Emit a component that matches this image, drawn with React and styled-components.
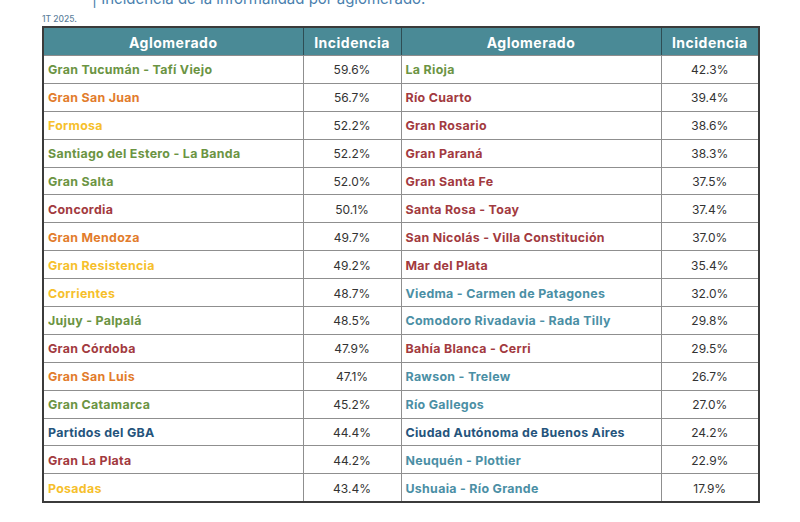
import styled, { createGlobalStyle } from "styled-components";

const GlobalStyle = createGlobalStyle`
  html, body {
    margin: 0;
    padding: 0;
    background: #ffffff;
  }
  body {
    font-family: "Inter", "Liberation Sans", sans-serif;
    width: 800px;
    height: 522px;
    overflow: hidden;
  }
`;

const COLORS = {
  green: "#6b9443",
  orange: "#e27c2c",
  yellow: "#f6bf2c",
  red: "#a23a40",
  navy: "#25547c",
  teal: "#4b8fa5",
};

const LEFT = [
  ["Gran Tucumán - Tafí Viejo", "59.6%", "green"],
  ["Gran San Juan", "56.7%", "orange"],
  ["Formosa", "52.2%", "yellow"],
  ["Santiago del Estero - La Banda", "52.2%", "green"],
  ["Gran Salta", "52.0%", "green"],
  ["Concordia", "50.1%", "red"],
  ["Gran Mendoza", "49.7%", "orange"],
  ["Gran Resistencia", "49.2%", "yellow"],
  ["Corrientes", "48.7%", "yellow"],
  ["Jujuy - Palpalá", "48.5%", "green"],
  ["Gran Córdoba", "47.9%", "red"],
  ["Gran San Luis", "47.1%", "orange"],
  ["Gran Catamarca", "45.2%", "green"],
  ["Partidos del GBA", "44.4%", "navy"],
  ["Gran La Plata", "44.2%", "red"],
  ["Posadas", "43.4%", "yellow"],
];

const RIGHT = [
  ["La Rioja", "42.3%", "green"],
  ["Río Cuarto", "39.4%", "red"],
  ["Gran Rosario", "38.6%", "red"],
  ["Gran Paraná", "38.3%", "red"],
  ["Gran Santa Fe", "37.5%", "red"],
  ["Santa Rosa - Toay", "37.4%", "red"],
  ["San Nicolás - Villa Constitución", "37.0%", "red"],
  ["Mar del Plata", "35.4%", "red"],
  ["Viedma - Carmen de Patagones", "32.0%", "teal"],
  ["Comodoro Rivadavia - Rada Tilly", "29.8%", "teal"],
  ["Bahía Blanca - Cerri", "29.5%", "red"],
  ["Rawson - Trelew", "26.7%", "teal"],
  ["Río Gallegos", "27.0%", "teal"],
  ["Ciudad Autónoma de Buenos Aires", "24.2%", "navy"],
  ["Neuquén - Plottier", "22.9%", "teal"],
  ["Ushuaia - Río Grande", "17.9%", "teal"],
];

const Page = styled.div`
  display: flex;
  flex-direction: column;
  padding: 0 42px;
`;

const Title = styled.div`
  margin-top: -11px;
  padding-left: 50px;
  font-family: "Inter", "Liberation Sans", sans-serif;
  font-size: 15px;
  line-height: 20px;
  color: #4a7fae;
  white-space: nowrap;
`;

const Period = styled.div`
  margin-top: 5px;
  font-family: "Inter", sans-serif;
  font-size: 8.5px;
  line-height: 10px;
  font-weight: 500;
  color: #5d7f9c;
`;

const Table = styled.table`
  margin-top: 2px;
  width: 716px;
  border-collapse: collapse;
  table-layout: fixed;
  border: 2px solid #3b3b3b;
`;

const HeadCell = styled.th`
  height: 25px;
  padding: 2px 0 0;
  background: #4a8a96;
  color: #ffffff;
  font-family: "Inter", sans-serif;
  font-weight: 700;
  font-size: 14px;
  line-height: 18px;
  letter-spacing: 0.5px;
  text-align: center;
  vertical-align: middle;
  border: 1px solid #2e4d54;
  border-bottom: 1.5px solid #8d8d8d;
`;

const NameCell = styled.td`
  height: 24.9px;
  padding: 2px 0 0 4px;
  font-family: "Inter", sans-serif;
  font-weight: 700;
  font-size: 12.4px;
  line-height: 16px;
  letter-spacing: 0.3px;
  color: ${({ $tone }) => COLORS[$tone]};
  border: 1.5px solid #8f8f8f;
  white-space: nowrap;
  vertical-align: middle;
`;

const ValueCell = styled.td`
  padding: 2px 0 0;
  font-family: "Inter", sans-serif;
  font-weight: 400;
  font-size: 12px;
  line-height: 16px;
  color: #333333;
  text-align: center;
  border: 1.5px solid #8f8f8f;
  vertical-align: middle;
`;

export default function App() {
  return (
    <>
      <GlobalStyle />
      <Page>
        <Title>| Incidencia de la informalidad por aglomerado.</Title>
        <Period>1T 2025.</Period>
        <Table>
          <colgroup>
            <col style={{ width: 260 }} />
            <col style={{ width: 98 }} />
            <col style={{ width: 260 }} />
            <col style={{ width: 98 }} />
          </colgroup>
          <thead>
            <tr>
              <HeadCell>Aglomerado</HeadCell>
              <HeadCell>Incidencia</HeadCell>
              <HeadCell>Aglomerado</HeadCell>
              <HeadCell>Incidencia</HeadCell>
            </tr>
          </thead>
          <tbody>
            {LEFT.map((left, i) => {
              const right = RIGHT[i];
              return (
                <tr key={left[0]}>
                  <NameCell $tone={left[2]}>{left[0]}</NameCell>
                  <ValueCell>{left[1]}</ValueCell>
                  <NameCell $tone={right[2]}>{right[0]}</NameCell>
                  <ValueCell>{right[1]}</ValueCell>
                </tr>
              );
            })}
          </tbody>
        </Table>
      </Page>
    </>
  );
}
